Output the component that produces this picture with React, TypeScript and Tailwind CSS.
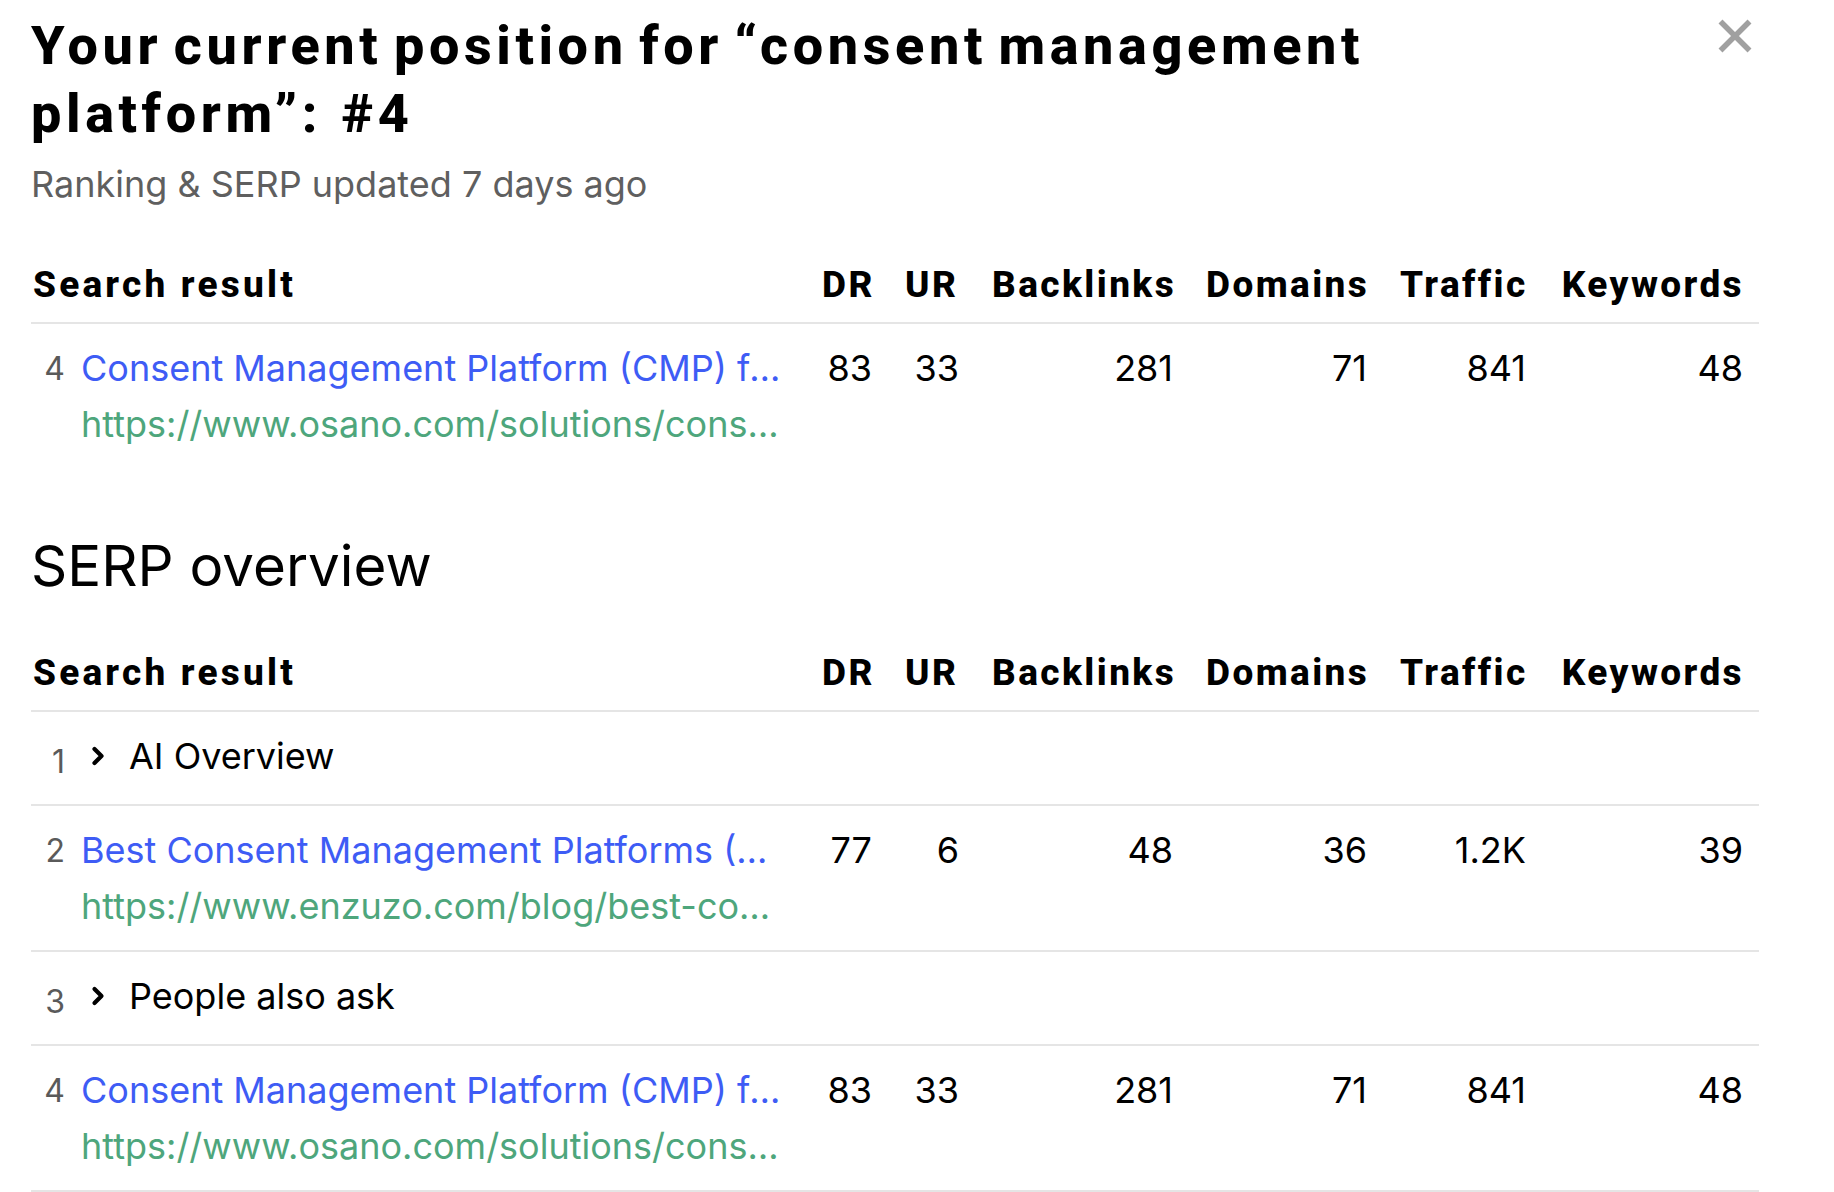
import { ChevronRight, X } from "lucide-react";

type ResultRow = {
  pos: number;
  title: string;
  url: string;
  dr: string;
  ur: string;
  backlinks: string;
  domains: string;
  traffic: string;
  keywords: string;
};

const osano: ResultRow = {
  pos: 4,
  title: "Consent Management Platform (CMP) for your business",
  url: "https://www.osano.com/solutions/consent-management-platform",
  dr: "83",
  ur: "33",
  backlinks: "281",
  domains: "71",
  traffic: "841",
  keywords: "48",
};

const enzuzo: ResultRow = {
  pos: 2,
  title: "Best Consent Management Platforms (2025)",
  url: "https://www.enzuzo.com/blog/best-consent-management-platforms",
  dr: "77",
  ur: "6",
  backlinks: "48",
  domains: "36",
  traffic: "1.2K",
  keywords: "39",
};

function TableHead() {
  return (
    <div className="grid h-[63px] grid-cols-[757px_49px_53px_180px_160px_125px_185px] items-start gap-x-[34px] border-b-2 border-[#e5e5e5] pr-[15px] font-['Roboto',sans-serif] text-[37px] leading-[48px] font-extrabold tracking-[2.4px] whitespace-nowrap text-black">
      <div className="pl-[2px] tracking-[3.2px]">Search result</div>
      <div className="text-right">DR</div>
      <div className="text-right">UR</div>
      <div className="text-right">Backlinks</div>
      <div className="text-right">Domains</div>
      <div className="text-right">Traffic</div>
      <div className="text-right">Keywords</div>
    </div>
  );
}

function Position({ n, low }: { n: number; low?: boolean }) {
  return (
    <span
      className={`w-[34px] shrink-0 text-right text-[32px] leading-[56px] text-[#5a5a5a] ${low ? "pt-[11px]" : "pt-[1px]"}`}
    >
      {n}
    </span>
  );
}

function Row({ row, last }: { row: ResultRow; last?: boolean }) {
  return (
    <div
      className={`grid grid-cols-[758px_49px_53px_180px_160px_125px_183px] gap-x-[34px] pr-[16px] pt-[16px] pb-[16px] text-[36px] leading-[56px] text-black ${last ? "" : "border-b-2 border-[#e5e5e5]"}`}
    >
      <div className="flex min-w-0">
        <Position n={row.pos} />
        <div className="ml-[16px] min-w-0 flex-1 pr-[8px]">
          <div className="truncate text-[#3e5cf5]">{row.title}</div>
          <div className="truncate text-[#4ea67c]">{row.url}</div>
        </div>
      </div>
      <div className="text-right">{row.dr}</div>
      <div className="text-right">{row.ur}</div>
      <div className="text-right">{row.backlinks}</div>
      <div className="text-right">{row.domains}</div>
      <div className="text-right">{row.traffic}</div>
      <div className="text-right">{row.keywords}</div>
    </div>
  );
}

function Group({ pos, label }: { pos: number; label: string }) {
  return (
    <div className="flex h-[94px] items-center border-b-2 border-[#e5e5e5] pb-[4px] text-[36px] leading-[57px] text-black">
      <Position n={pos} low />
      <ChevronRight className="ml-[19px] size-[28px] shrink-0" strokeWidth={3.6} />
      <span className="ml-[17px]">{label}</span>
    </div>
  );
}

export default function App() {
  return (
    <div className="h-[1192px] w-[1834px] overflow-hidden bg-white pl-[31px] font-['Inter',sans-serif]">
      <div className="w-[1728px]">
        <div className="flex items-start justify-between pt-[12px]">
          <h1 className="w-[1400px] font-['Roboto',sans-serif] text-[54px] leading-[68px] font-extrabold tracking-[4.6px] [word-spacing:-6.5px] text-black">
            Your current position for “consent management platform”:{" "}
            <span className="ml-[8px]">#4</span>
          </h1>
          <X
            className="-mt-[5px] -mr-[5px] size-[58px] text-[#a0a0a0]"
            strokeWidth={2.3}
            strokeLinecap="butt"
          />
        </div>
        <p className="mt-[12px] text-[36px] leading-[48px] text-[#5f5f5f]">
          Ranking &amp; SERP updated 7 days ago
        </p>
        <div className="mt-[53px]">
          <TableHead />
          <Row row={osano} last />
        </div>
        <h2 className="mt-[62px] text-[56.5px] leading-[72px] text-black">SERP overview</h2>
        <div className="mt-[47px]">
          <TableHead />
          <Group pos={1} label="AI Overview" />
          <Row row={enzuzo} />
          <Group pos={3} label="People also ask" />
          <Row row={osano} />
        </div>
      </div>
    </div>
  );
}
